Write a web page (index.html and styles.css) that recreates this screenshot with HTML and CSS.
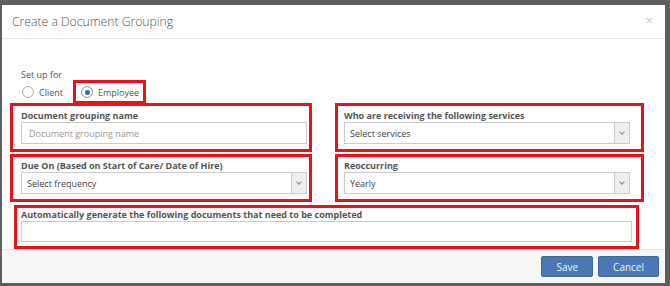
FILE: index.html
```html
<!DOCTYPE html>
<html lang="en">
<head>
  <meta charset="UTF-8">
  <title>Create a Document Grouping</title>
  <link rel="stylesheet" href="styles.css">
</head>
<body>
<div class="modal">
  <div class="modal-header">
    <h4 class="modal-title">Create a Document Grouping</h4>
    <span class="close">&times;</span>
  </div>
  <div class="modal-body">
    <div class="setup-label">Set up for</div>
    <div class="radios">
      <label class="radio"><span class="dot"></span>Client</label>
      <label class="radio marked"><span class="dot checked"></span>Employee</label>
    </div>
    <div class="grid">
      <div class="marked box box-name">
        <div class="field-label">Document grouping name</div>
        <div class="input placeholder">Document grouping name</div>
      </div>
      <div class="marked box box-services">
        <div class="field-label">Who are receiving the following services</div>
        <div class="select"><span class="value">Select services</span><span class="arrow"></span></div>
      </div>
      <div class="marked box box-due">
        <div class="field-label">Due On (Based on Start of Care/ Date of Hire)</div>
        <div class="select"><span class="value">Select frequency</span><span class="arrow"></span></div>
      </div>
      <div class="marked box box-reoccur">
        <div class="field-label">Reoccurring</div>
        <div class="select"><span class="value">Yearly</span><span class="arrow"></span></div>
      </div>
    </div>
    <div class="marked box box-docs">
      <div class="field-label">Automatically generate the following documents that need to be completed</div>
      <div class="input tall"></div>
    </div>
  </div>
  <div class="modal-footer">
    <button class="btn">Save</button>
    <button class="btn">Cancel</button>
  </div>
</div>
</body>
</html>
```
FILE: styles.css
```css
body {
  margin: 0;
  padding: 5px 5px 3px 2px;
  background: #5e5e5e;
  font-family: "Open Sans", Arial, sans-serif;
  color: #555;
}
.modal {
  background: #fff;
  height: 278px;
  display: flex;
  flex-direction: column;
}
.modal-header {
  height: 38px;
  border-bottom: 1px solid #e5e5e5;
  display: flex;
  align-items: center;
  justify-content: space-between;
  padding: 0 12px 0 10px;
}
.modal-title {
  margin: 0;
  font-size: 12.2px;
  font-weight: 300;
  color: #555;
}
.close {
  color: #c4c4c4;
  font-size: 13px;
  line-height: 1;
  margin-top: -3px;
}
.modal-body {
  flex: 1;
  padding: 30px 0 0 8px;
}
.setup-label {
  font-size: 9px;
  line-height: 12px;
  color: #555;
  padding-left: 11px;
}
.radios {
  display: flex;
  align-items: center;
  height: 24px;
  margin-top: -1px;
  padding-left: 12px;
}
.radio {
  display: flex;
  align-items: center;
  font-size: 9px;
  color: #555;
  gap: 5px;
  margin-right: 10px;
}
.radio.marked {
  padding: 0 4px 0 5px;
  height: 18px;
}
.dot {
  width: 10px;
  height: 10px;
  border: 1px solid #aaa;
  border-radius: 50%;
  box-sizing: content-box;
  position: relative;
}
.dot.checked {
  border-color: #6f95c6;
}
.dot.checked::after {
  content: "";
  position: absolute;
  left: 2.5px;
  top: 2.5px;
  width: 5px;
  height: 5px;
  border-radius: 50%;
  background: #3b6bb0;
}
.marked {
  border: 3px solid #e8111c;
}
.grid {
  display: grid;
  grid-template-columns: 302px 309px;
  column-gap: 23px;
  row-gap: 2px;
  margin-top: -1px;
}
.box {
  display: flex;
  flex-direction: column;
  box-sizing: border-box;
}
.box-name, .box-due {
  padding: 4px 2px 5px 8px;
}
.box-services, .box-reoccur {
  padding: 4px 11px 5px 6px;
}
.box-due, .box-reoccur {
  padding-top: 3px;
}
.field-label {
  font-size: 9px;
  font-weight: 700;
  color: #555;
  line-height: 12px;
  white-space: nowrap;
}
.input, .select {
  height: 22px;
  border: 1px solid #ccc;
  box-sizing: border-box;
  font-size: 9px;
  display: flex;
  align-items: center;
  background: #fff;
}
.input {
  padding-left: 7px;
}
.placeholder {
  color: #999;
}
.select {
  color: #444;
}
.select .value {
  flex: 1;
  padding-left: 5px;
}
.select .arrow {
  width: 14px;
  height: 100%;
  background: #eee;
  border-left: 1px solid #ccc;
  position: relative;
}
.select .arrow::after {
  content: "";
  position: absolute;
  left: 5px;
  top: 7px;
  width: 3px;
  height: 3px;
  border-right: 1px solid #888;
  border-bottom: 1px solid #888;
  transform: rotate(45deg);
}
.box-docs {
  margin: 3px 26px 0 4px;
  padding: 1px 4px 4px 4px;
}
.input.tall {
  height: 21px;
}
.modal-footer {
  height: 38px;
  border-top: 1px solid #e5e5e5;
  background: #f7f7f7;
  box-sizing: border-box;
  display: flex;
  justify-content: flex-end;
  align-items: center;
  gap: 5px;
  padding: 0 6px 0 0;
}
.btn {
  height: 21px;
  padding: 0 14px;
  background: #4b78b3;
  border: 1px solid #3c67a0;
  color: #f2f5fa;
  font-family: "Open Sans", Arial, sans-serif;
  font-size: 10px;
  border-radius: 2px;
}
```
